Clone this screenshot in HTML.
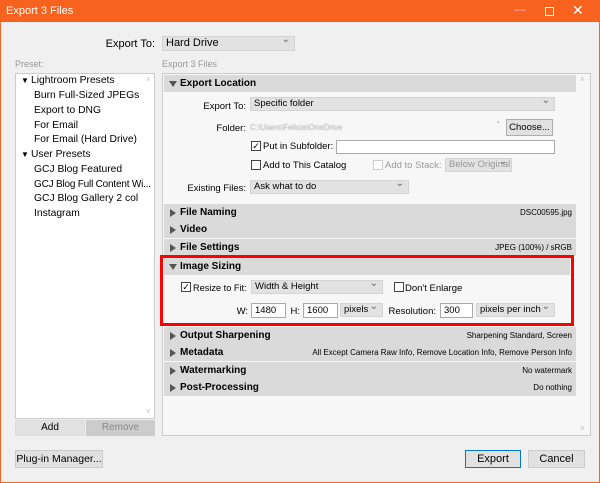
<!DOCTYPE html>
<html><head><style>
*{box-sizing:border-box;margin:0;padding:0}
body{width:600px;height:483px;overflow:hidden;background:#f0f0f0;font-family:"Liberation Sans",sans-serif;font-size:10px;color:#000;position:relative}
div,span{white-space:nowrap;overflow:hidden}
.a{position:absolute;white-space:nowrap}
.win{position:absolute;left:0;top:0;width:600px;height:483px;border:1px solid #f0692a;border-top:none}
.tb{position:absolute;left:0;top:0;width:600px;height:22px;background:#f8621f;color:#fff;font-size:11px}
.dd{position:absolute;background:#e2e2e2;border:1px solid #d4d4d4;height:14px;padding-left:3px;line-height:12px;font-size:9.5px}
.dd:after{content:"⌄";position:absolute;right:4px;top:-3px;color:#666;font-size:10px}
.btn{position:absolute;background:#e1e1e1;border:1px solid #adadad;text-align:center;font-size:10px}
.hd{position:absolute;left:164px;width:400px;height:17px;background:#dadada;font-weight:bold;font-size:10px;line-height:17px;padding-left:16px}
.hd:before{content:"";position:absolute;left:6px;top:5px;border-left:6px solid #555;border-top:4px solid transparent;border-bottom:4px solid transparent}
.hd.o:before{left:5px;top:6px;border-top:6px solid #555;border-left:4px solid transparent;border-right:4px solid transparent;border-bottom:none}
.hd span{position:absolute;right:4px;font-weight:normal;font-size:8px}
.cb{position:absolute;width:10px;height:10px;border:1px solid #444;background:#fff;font-size:9px;line-height:8px;text-align:center}
.tf{position:absolute;background:#fff;border:1px solid #aaa;height:15px;padding-left:3px;line-height:13px;font-size:9.5px}
.li{position:absolute;left:34px;font-size:10.3px}
.r{position:absolute;text-align:right;font-size:9.5px}
</style></head><body>
<div class="win"></div>
<div class="tb"><span class="a" style="left:6px;top:5px">Export 3 Files</span>
<span class="a" style="left:514px;top:2px;font-size:12px;color:#fbb">—</span>
<div class="a" style="left:545px;top:7px;width:9px;height:9px;border:1px solid #fff"></div>
<span class="a" style="left:572px;top:2px;font-size:14px">✕</span></div>

<span class="r" style="right:445px;top:38px;font-size:11px">Export To:</span>
<div class="dd" style="left:162px;top:36px;width:133px;height:15px;font-size:11px">Hard Drive</div>
<span class="a" style="left:15px;top:59px;color:#999;font-size:9px">Preset:</span>
<span class="a" style="left:162px;top:59px;color:#999;font-size:9px">Export 3 Files</span>

<div class="a" style="left:15px;top:73px;width:140px;height:346px;background:#fff;border:1px solid #ccc"></div>
<span class="a" style="left:146px;top:75px;color:#bbb;font-size:8px">˄</span>
<span class="a" style="left:146px;top:407px;color:#bbb;font-size:8px">˅</span>
<span class="a" style="left:21px;top:76px;font-size:8px">▼</span><span class="li" style="left:31px;top:75px">Lightroom Presets</span>
<span class="li" style="top:90px">Burn Full-Sized JPEGs</span>
<span class="li" style="top:105px">Export to DNG</span>
<span class="li" style="top:120px">For Email</span>
<span class="li" style="top:134px">For Email (Hard Drive)</span>
<span class="a" style="left:21px;top:150px;font-size:8px">▼</span><span class="li" style="left:31px;top:149px">User Presets</span>
<span class="li" style="top:164px">GCJ Blog Featured</span>
<span class="li" style="top:179px;font-size:10px;letter-spacing:-0.2px">GCJ Blog Full Content Wi...</span>
<span class="li" style="top:193px">GCJ Blog Gallery 2 col</span>
<span class="li" style="top:208px">Instagram</span>
<div class="btn" style="left:15px;top:420px;width:70px;height:16px;line-height:14px;border-color:#ddd">Add</div>
<div class="btn" style="left:86px;top:420px;width:69px;height:16px;line-height:14px;background:#ccc;border-color:#ccc;color:#888">Remove</div>
<div class="btn" style="left:15px;top:450px;width:88px;height:18px;line-height:16px;font-size:10.5px;border-color:#ccc">Plug-in Manager...</div>

<div class="a" style="left:162px;top:73px;width:429px;height:363px;background:#f7f7f7;border:1px solid #ccc"></div>
<span class="a" style="left:580px;top:75px;color:#bbb;font-size:8px">˄</span>
<span class="a" style="left:580px;top:424px;color:#bbb;font-size:8px">˅</span>

<div class="hd o" style="top:75px;width:412px">Export Location</div>
<span class="r" style="right:354px;top:101px">Export To:</span>
<div class="dd" style="left:250px;top:97px;width:305px">Specific folder</div>
<span class="r" style="right:354px;top:123px">Folder:</span>
<span class="a" style="left:250px;top:123px;color:#aaa;font-size:8px;filter:blur(0.6px)">C:\Users\Felicia\OneDrive</span>
<span class="a" style="left:497px;top:121px">˙</span>
<div class="btn" style="left:506px;top:119px;width:47px;height:17px;line-height:15px;font-size:9.5px">Choose...</div>
<div class="cb" style="left:251px;top:141px">✓</div><span class="a" style="left:263px;top:141px;font-size:9.5px">Put in Subfolder:</span>
<div class="tf" style="left:336px;top:140px;width:219px;height:14px"></div>
<div class="cb" style="left:251px;top:160px"></div><span class="a" style="left:263px;top:160px;font-size:9.5px">Add to This Catalog</span>
<div class="cb" style="left:373px;top:160px;border-color:#ccc"></div><span class="a" style="left:385px;top:160px;color:#999;font-size:9.5px">Add to Stack:</span>
<div class="dd" style="left:445px;top:158px;width:67px;color:#999">Below Original</div>
<span class="r" style="right:354px;top:183px">Existing Files:</span>
<div class="dd" style="left:250px;top:180px;width:159px">Ask what to do</div>

<div class="hd" style="top:204px;width:412px">File Naming<span>DSC00595.jpg</span></div>
<div class="hd" style="top:221px;width:412px">Video</div>
<div class="hd" style="top:239px;width:412px">File Settings<span>JPEG (100%) / sRGB</span></div>

<div class="hd o" style="top:258px;width:406px">Image Sizing</div>
<div class="cb" style="left:181px;top:282px">✓</div><span class="a" style="left:193px;top:283px;font-size:9.2px">Resize to Fit:</span>
<div class="dd" style="left:251px;top:280px;width:132px">Width &amp; Height</div>
<div class="cb" style="left:394px;top:282px"></div><span class="a" style="left:405px;top:283px;font-size:9.5px">Don't Enlarge</span>
<span class="r" style="right:352px;top:306px">W:</span>
<div class="tf" style="left:251px;top:303px;width:35px">1480</div>
<span class="r" style="right:300px;top:306px">H:</span>
<div class="tf" style="left:303px;top:303px;width:35px">1600</div>
<div class="dd" style="left:340px;top:303px;width:43px">pixels</div>
<span class="r" style="right:164px;top:306px">Resolution:</span>
<div class="tf" style="left:440px;top:303px;width:33px">300</div>
<div class="dd" style="left:476px;top:303px;width:79px">pixels per inch</div>
<div class="a" style="left:160px;top:255px;width:414px;height:71px;border:3px solid #f00"></div>

<div class="hd" style="top:327px;width:412px">Output Sharpening<span>Sharpening Standard, Screen</span></div>
<div class="hd" style="top:344px;width:412px">Metadata<span>All Except Camera Raw Info, Remove Location Info, Remove Person Info</span></div>
<div class="hd" style="top:362px;width:412px">Watermarking<span>No watermark</span></div>
<div class="hd" style="top:379px;width:412px">Post-Processing<span>Do nothing</span></div>

<div class="btn" style="left:465px;top:450px;width:56px;height:18px;line-height:16px;font-size:11px;border:1px solid #0078d7">Export</div>
<div class="btn" style="left:528px;top:450px;width:57px;height:18px;line-height:16px;font-size:11px;border-color:#ccc">Cancel</div>
</body></html>
